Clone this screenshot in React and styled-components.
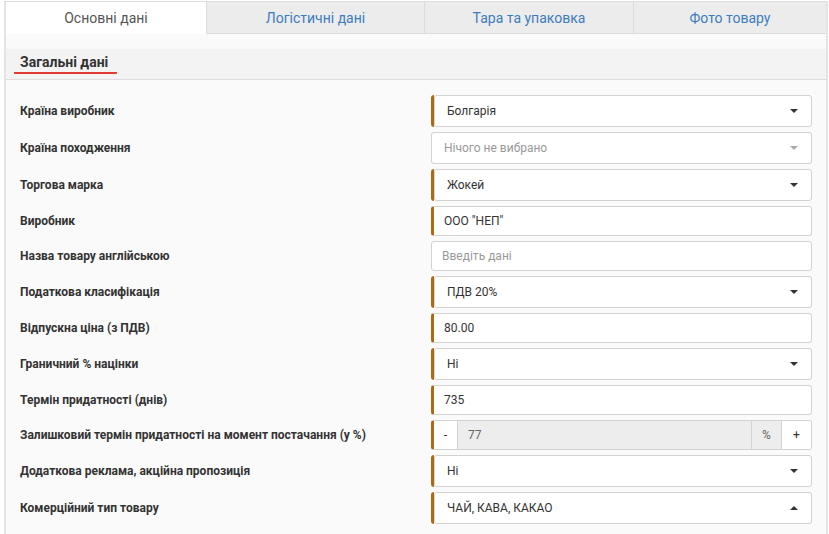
import styled, { createGlobalStyle, css } from "styled-components";

const GlobalStyle = createGlobalStyle`
	html, body {
		margin: 0;
		padding: 0;
		background: #ffffff;
		font-family: Roboto, "Liberation Sans", sans-serif;
		color: #333;
	}
	* {
		box-sizing: border-box;
	}
`;

const Frame = styled.div`
	margin: 1px 0 0 4px;
	width: 824px;
	height: 533px;
	border-left: 2px solid #e4e4e4;
	border-right: 2px solid #e4e4e4;
	border-top: 1px solid #dedede;
	background: #fafafa;
	display: flex;
	flex-direction: column;
`;

const Tabs = styled.div`
	display: grid;
	grid-template-columns: 200px 218px 209px 1fr;
	height: 32px;
	background: #ffffff;
`;

const Tab = styled.div`
	display: flex;
	align-items: center;
	justify-content: center;
	font-size: 14px;
	${(props) =>
		props.active
			? css`
					background: #ffffff;
					color: #555;
					border-bottom: 1px solid #ffffff;
			  `
			: css`
					background: #ececec;
					color: #3c7dc0;
					border-left: 1px solid #dcdcdc;
					border-bottom: 1px solid #dcdcdc;
			  `}
`;

const Content = styled.div`
	padding-top: 15px;
	flex: 1;
`;

const SectionHead = styled.div`
	height: 31px;
	background: #f3f3f3;
	border-bottom: 1px solid #dedede;
	padding: 0 0 0 8px;
	display: flex;
	align-items: stretch;
`;

const SectionTitle = styled.h3`
	margin: 0;
	padding: 3px 9px 0 6px;
	font-size: 14px;
	font-weight: 700;
	color: #333;
	display: flex;
	align-items: center;
	border-bottom: 2px solid #e53935;
	border-radius: 1px;
	height: 25px;
`;

const Form = styled.div`
	padding-top: 15px;
`;

const Row = styled.div`
	display: grid;
	grid-template-columns: 1fr 381px;
	align-items: center;
	padding: 0 14px;
	margin-bottom: 5px;
`;

const Label = styled.label`
	font-size: 12px;
	font-weight: 700;
	color: #333;
`;

const Accent = styled.div`
	display: flex;
	height: ${(props) => props.h}px;
	border-left: 3px solid ${(props) => (props.accent ? "#ad6b0e" : "transparent")};
	border-radius: 3px;
	margin-left: ${(props) => (props.accent ? 0 : -3)}px;
`;

const SelectBox = styled.div`
	flex: 1;
	display: flex;
	align-items: center;
	justify-content: space-between;
	background: #fff;
	border: 1px solid #d2d2d2;
	border-radius: 3px;
	padding: 0 13px 0 12px;
	font-size: 12px;
	color: ${(props) => (props.placeholder ? "#999" : "#333")};
`;

const Caret = styled.span`
	width: 0;
	height: 0;
	border-left: 4px solid transparent;
	border-right: 4px solid transparent;
	${(props) =>
		props.up
			? css`
					border-bottom: 4px solid ${props.muted ? "#aaa" : "#333"};
			  `
			: css`
					border-top: 4px solid ${props.muted ? "#aaa" : "#333"};
			  `}
`;

const TextBox = styled.div`
	height: 30px;
	display: flex;
	align-items: center;
	background: #fff;
	border: 1px solid #d2d2d2;
	border-left: ${(props) => (props.accent ? "3px solid #ad6b0e" : "1px solid #d2d2d2")};
	border-radius: 3px;
	padding: 0 10px;
	font-size: 12px;
	color: ${(props) => (props.placeholder ? "#999" : "#333")};
`;

const Stepper = styled.div`
	height: 30px;
	display: grid;
	grid-template-columns: 23px 1fr 30px 30px;
	border: 1px solid #d2d2d2;
	border-left: 3px solid #ad6b0e;
	border-radius: 3px;
	background: #fff;
	font-size: 12px;
	color: #333;
	overflow: hidden;
`;

const StepCell = styled.div`
	display: flex;
	align-items: center;
	justify-content: ${(props) => (props.left ? "flex-start" : "center")};
	padding-left: ${(props) => (props.left ? "10px" : "0")};
	background: ${(props) => (props.gray ? "#ededed" : "#fff")};
	border-left: ${(props) => (props.first ? "none" : "1px solid #d2d2d2")};
	color: ${(props) => (props.muted ? "#666" : "#333")};
`;

function Select({ value, placeholder, accent = true, up }) {
	return (
		<Accent accent={accent} h={32}>
			<SelectBox placeholder={placeholder ? 1 : 0}>
				<span>{value || placeholder}</span>
				<Caret up={up} muted={!!placeholder} />
			</SelectBox>
		</Accent>
	);
}

export default function App() {
	return (
		<>
			<GlobalStyle />
			<Frame>
				<Tabs>
					<Tab active>Основні дані</Tab>
					<Tab>Логістичні дані</Tab>
					<Tab>Тара та упаковка</Tab>
					<Tab>Фото товару</Tab>
				</Tabs>
				<Content>
					<SectionHead>
						<SectionTitle>Загальні дані</SectionTitle>
					</SectionHead>
					<Form>
						<Row>
							<Label>Країна виробник</Label>
							<Select value="Болгарія" />
						</Row>
						<Row>
							<Label>Країна походження</Label>
							<Select placeholder="Нічого не вибрано" accent={false} />
						</Row>
						<Row>
							<Label>Торгова марка</Label>
							<Select value="Жокей" />
						</Row>
						<Row>
							<Label>Виробник</Label>
							<TextBox accent>ООО "НЕП"</TextBox>
						</Row>
						<Row>
							<Label>Назва товару англійською</Label>
							<TextBox placeholder={1}>Введіть дані</TextBox>
						</Row>
						<Row>
							<Label>Податкова класифікація</Label>
							<Select value="ПДВ 20%" />
						</Row>
						<Row>
							<Label>Відпускна ціна (з ПДВ)</Label>
							<TextBox accent>80.00</TextBox>
						</Row>
						<Row>
							<Label>Граничний % націнки</Label>
							<Select value="Ні" />
						</Row>
						<Row>
							<Label>Термін придатності (днів)</Label>
							<TextBox accent>735</TextBox>
						</Row>
						<Row>
							<Label>Залишковий термін придатності на момент постачання (у %)</Label>
							<Stepper>
								<StepCell first>-</StepCell>
								<StepCell gray left muted>
									77
								</StepCell>
								<StepCell gray muted>
									%
								</StepCell>
								<StepCell>+</StepCell>
							</Stepper>
						</Row>
						<Row>
							<Label>Додаткова реклама, акційна пропозиція</Label>
							<Select value="Ні" />
						</Row>
						<Row>
							<Label>Комерційний тип товару</Label>
							<Select value="ЧАЙ, КАВА, КАКАО" up />
						</Row>
					</Form>
				</Content>
			</Frame>
		</>
	);
}
